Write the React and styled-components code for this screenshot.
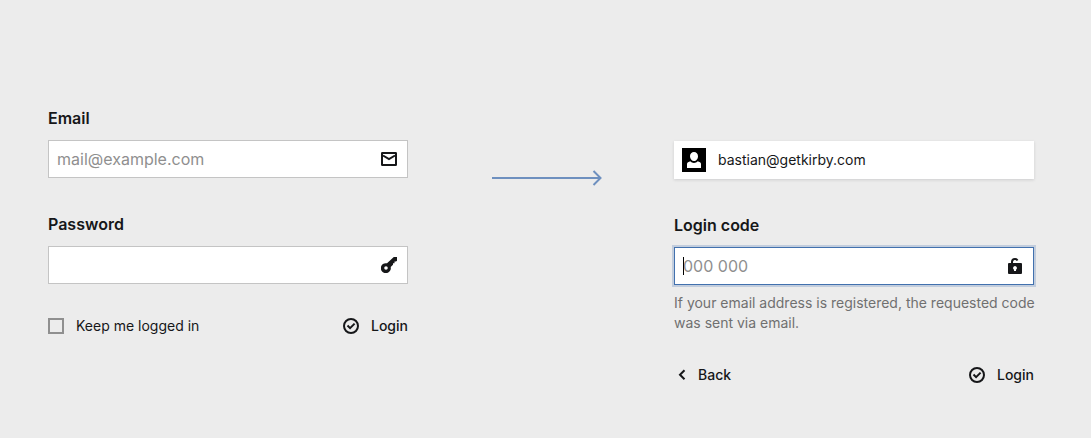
import React from "react";
import styled, { createGlobalStyle } from "styled-components";

const GlobalStyle = createGlobalStyle`
  *, *::before, *::after { box-sizing: border-box; }
  body {
    margin: 0;
    background: #ececec;
    color: #161719;
    font-family: Inter, "Liberation Sans", sans-serif;
    font-size: 14px;
    line-height: 20px;
  }
`;

const Page = styled.main`
  display: grid;
  grid-template-columns: minmax(0, 360fr) minmax(0, 266fr) minmax(0, 360fr);
  align-items: start;
  padding: 106px 57px 32px 48px;
`;

const Form = styled.form`
  display: flex;
  flex-direction: column;
  padding-top: ${(p) => (p.$offset ? "35px" : "0")};
`;

const Field = styled.div`
  margin-bottom: ${(p) => (p.$last ? "32px" : "34px")};
`;

const Label = styled.label`
  display: block;
  margin-bottom: 10px;
  font-size: 16px;
  line-height: 24px;
  font-weight: 600;
`;

const InputBox = styled.div`
  position: relative;
  display: flex;
  align-items: center;
  height: 38px;
  padding-right: 10px;
  background: #fff;
  border: 1px solid ${(p) => (p.$active ? "#4271ae" : "#c4c4c4")};
  box-shadow: ${(p) => (p.$active ? "0 0 0 2px rgba(66, 113, 174, 0.25)" : "none")};
`;

const Input = styled.input`
  flex: 1;
  min-width: 0;
  height: 100%;
  padding: 0 8px;
  border: 0;
  outline: 0;
  background: transparent;
  color: inherit;
  font: inherit;
  font-size: 16px;

  &::placeholder {
    color: #8f8f8f;
    opacity: 1;
  }
`;

const Caret = styled.span`
  position: absolute;
  left: 8px;
  top: 9px;
  width: 1px;
  height: 18px;
  background: #000;
`;

const Icon = styled.svg`
  display: block;
  flex: none;
`;

const Help = styled.p`
  margin: 8px -8px 0 0;
  color: #707070;
`;

const Footer = styled.div`
  display: flex;
  align-items: center;
  justify-content: space-between;
`;

const Remember = styled.label`
  display: flex;
  align-items: center;
  gap: 12px;
`;

const Checkbox = styled.input`
  appearance: none;
  width: 16px;
  height: 16px;
  margin: 0;
  border: 2px solid #8f8f8f;

  &:checked { background: #161719; }
`;

const Button = styled.button`
  display: flex;
  align-items: center;
  gap: 12px;
  padding: 0;
  border: 0;
  background: none;
  color: inherit;
  font: inherit;
  font-weight: 500;
  cursor: pointer;
`;

const UserCard = styled.div`
  display: flex;
  align-items: center;
  gap: 12px;
  height: 38px;
  margin-bottom: 34px;
  padding: 0 8px;
  background: #fff;
  box-shadow: 0 1px 3px rgba(22, 23, 25, 0.14);
`;

const ArrowCell = styled.div`
  display: flex;
  align-items: center;
  justify-content: center;
  height: 144px;
  padding-left: 12px;
`;

const MailIcon = () => (
  <Icon width="16" height="16" viewBox="0 0 16 16" fill="none" stroke="currentColor" strokeWidth="2" aria-hidden="true">
    <rect x="1" y="2" width="14" height="12" rx="0.3" />
    <path d="M2 4.5 8 8.2 14 4.5" />
  </Icon>
);

const KeyIcon = () => (
  <Icon width="16" height="16" viewBox="0 0 16 16" fill="currentColor" aria-hidden="true">
    <path
      fillRule="evenodd"
      d="M12.800 0H16v3.700l-1 .8h-1.500v1.700h-1.500v1.600L9.700 10a5 5 0 1 1-3.700-3.700ZM5 9.200a1.800 1.800 0 1 0 0 3.600 1.800 1.800 0 0 0 0-3.600Z"
    />
  </Icon>
);

const UnlockIcon = () => (
  <Icon width="16" height="16" viewBox="0 0 16 16" fill="currentColor" aria-hidden="true">
    <path d="M8 0a4 4 0 0 0-4 4v1H2a1 1 0 0 0-1 1v9a1 1 0 0 0 1 1h12a1 1 0 0 0 1-1V6a1 1 0 0 0-1-1H6V4a2 2 0 0 1 3.700-1l1.700-1A4 4 0 0 0 8 0Z" />
    <path fill="#fff" d="M8 8a2 2 0 0 0-1 3.700V13h2v-1.300A2 2 0 0 0 8 8Z" />
  </Icon>
);

const CheckIcon = () => (
  <Icon width="16" height="16" viewBox="0 0 16 16" fill="none" stroke="currentColor" strokeWidth="2" aria-hidden="true">
    <circle cx="8" cy="8" r="7" />
    <path d="m4.500 7.500 2.600 2.600 4.500-4.500" />
  </Icon>
);

const BackIcon = () => (
  <Icon width="12" height="16" viewBox="0 0 12 16" fill="none" stroke="currentColor" strokeWidth="2" aria-hidden="true">
    <path d="M10.500 3.300 6 7.800l4.500 4.500" />
  </Icon>
);

const UserIcon = () => (
  <Icon width="24" height="24" viewBox="0 0 24 24" aria-hidden="true">
    <path d="M0 0h24v24H0z" />
    <path
      fill="#fff"
      d="M12 4c-2.300 0-4 1.800-4 4.200 0 2.600 1.700 4.800 4 4.800s4-2.200 4-4.800C16 5.800 14.300 4 12 4ZM8.300 13.300 6 14.300c-.7.4-1 1-1 1.700v4h14v-4c0-.7-.3-1.300-1-1.700l-2.300-1C14.700 14.400 13.400 15 12 15s-2.700-.6-3.700-1.700Z"
    />
  </Icon>
);

const Arrow = () => (
  <Icon width="110" height="16" viewBox="0 0 110 16" fill="none" stroke="#6e90bf" strokeWidth="2" aria-hidden="true">
    <path d="M0 8h109M101.500 1l7 7-7 7" />
  </Icon>
);

const stay = (event) => event.preventDefault();

export default function App() {
  return (
    <>
      <GlobalStyle />
      <Page>
        <Form onSubmit={stay}>
          <Field>
            <Label htmlFor="email">Email</Label>
            <InputBox>
              <Input id="email" type="email" placeholder="mail@example.com" />
              <MailIcon />
            </InputBox>
          </Field>
          <Field $last>
            <Label htmlFor="password">Password</Label>
            <InputBox>
              <Input id="password" type="password" />
              <KeyIcon />
            </InputBox>
          </Field>
          <Footer>
            <Remember>
              <Checkbox type="checkbox" />
              Keep me logged in
            </Remember>
            <Button type="submit">
              <CheckIcon />
              Login
            </Button>
          </Footer>
        </Form>

        <ArrowCell>
          <Arrow />
        </ArrowCell>

        <Form $offset onSubmit={stay}>
          <UserCard>
            <UserIcon />
            bastian@getkirby.com
          </UserCard>
          <Field $last>
            <Label htmlFor="code">Login code</Label>
            <InputBox $active>
              <Input id="code" type="text" inputMode="numeric" placeholder="000 000" aria-describedby="code-help" />
              <Caret />
              <UnlockIcon />
            </InputBox>
            <Help id="code-help">If your email address is registered, the requested code was sent via email.</Help>
          </Field>
          <Footer>
            <Button type="button">
              <BackIcon />
              Back
            </Button>
            <Button type="submit">
              <CheckIcon />
              Login
            </Button>
          </Footer>
        </Form>
      </Page>
    </>
  );
}
